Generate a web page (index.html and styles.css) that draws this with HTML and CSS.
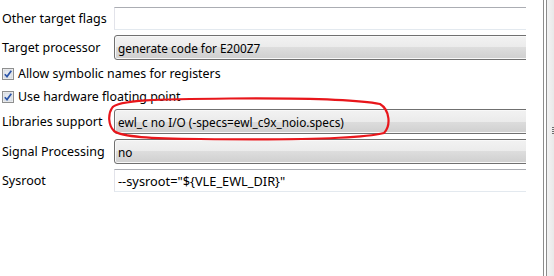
FILE: index.html
```html
<!DOCTYPE html>
<html lang="en">
<head>
<meta charset="UTF-8" />
<title>Compiler options</title>
<link rel="stylesheet" href="styles.css">
</head>
<body>

<div class="page">
  <div class="form">
    <div class="row text-row">
      <span class="label">Other target flags</span>
      <div class="textbox"></div>
    </div>

    <div class="row combo-row">
      <span class="label">Target processor</span>
      <div class="combo">generate code for E200Z7</div>
    </div>

    <div class="checks">
      <div class="check-row">
        <svg class="checkbox" width="12" height="12" viewBox="0 0 12 12">
          <rect x="0.5" y="0.5" width="11" height="11" fill="#f4f4f4" stroke="#8e8f8f"/>
          <rect x="2" y="2" width="8" height="8" fill="#e4e8ee" stroke="#c5cbd4" stroke-width="0.6"/>
          <path d="M2.8 6.2 L5 8.6 L9.3 2.8" fill="none" stroke="#2c55a8" stroke-width="1.7"/>
        </svg>
        <span>Allow symbolic names for registers</span>
      </div>
      <div class="check-row">
        <svg class="checkbox" width="12" height="12" viewBox="0 0 12 12">
          <rect x="0.5" y="0.5" width="11" height="11" fill="#f4f4f4" stroke="#8e8f8f"/>
          <rect x="2" y="2" width="8" height="8" fill="#e4e8ee" stroke="#c5cbd4" stroke-width="0.6"/>
          <path d="M2.8 6.2 L5 8.6 L9.3 2.8" fill="none" stroke="#2c55a8" stroke-width="1.7"/>
        </svg>
        <span>Use hardware floating point</span>
      </div>
    </div>

    <div class="row combo-row">
      <span class="label">Libraries support</span>
      <div class="combo">ewl_c no I/O (-specs=ewl_c9x_noio.specs)</div>
    </div>

    <div class="row combo-row">
      <span class="label">Signal Processing</span>
      <div class="combo">no</div>
    </div>

    <div class="row text-row">
      <span class="label">Sysroot</span>
      <div class="textbox">--sysroot="${VLE_EWL_DIR}"</div>
    </div>
  </div>

  <div class="gutter"></div>
  <div class="sash"><span class="grip"></span></div>
</div>

<!-- hand drawn marker round the libraries combo -->
<svg class="marker" width="554" height="276" viewBox="0 0 554 276">
  <path d="M112 108 C 116 100, 160 99, 230 98.5 C 300 98, 360 100, 380 104 C 390 110, 391 126, 384 133 C 360 139, 280 140, 200 139 C 150 138.5, 122 137, 114 131 C 108 125, 108 114, 112 108 Z"
        fill="none" stroke="#e8161b" stroke-width="2.2"/>
</svg>

</body>
</html>
```

FILE: styles.css
```css
body {
  margin: 0;
  background: #fff;
  font-family: "Noto Sans", "Open Sans", sans-serif;
  font-size: 12.4px;
  color: #000;
}
.page {
  display: flex;
  height: 276px;
}
.form {
  width: 526px;
  overflow: hidden;
  padding-top: 7px;
  display: flex;
  flex-direction: column;
  gap: 5px;
}
.row {
  display: flex;
  align-items: stretch;
}
.text-row {
  height: 23px;
}
.combo-row {
  height: 25px;
}
.label {
  width: 112px;
  padding-left: 2px;
  flex: none;
  display: flex;
  align-items: center;
  font-size: 12.5px;
}
.textbox {
  flex: none;
  width: 440px;
  box-sizing: border-box;
  border: 1px solid #e2e3ea;
  border-top-color: #abadb3;
  border-bottom-color: #e3e9ef;
  padding-left: 3px;
  display: flex;
  align-items: center;
  font-size: 12.8px;
}
.combo {
  flex: none;
  width: 440px;
  box-sizing: border-box;
  border: 1px solid #707070;
  border-radius: 3px;
  box-shadow: inset 0 0 0 1px #f8f8f8;
  background: linear-gradient(#f2f2f2 0%, #ebebeb 50%, #dddddd 50%, #cfcfcf 100%);
  padding-left: 3px;
  display: flex;
  align-items: center;
  font-size: 11.8px;
}
.checks {
  margin: -3px 0 -4px;
}
.check-row {
  height: 23px;
  display: flex;
  align-items: center;
  padding-left: 2px;
}
.checkbox {
  flex: none;
  margin-right: 4px;
}
.gutter {
  width: 17px;
}
.sash {
  width: 11px;
  box-sizing: border-box;
  border-left: 1px solid #8c8c8c;
  position: relative;
  background: linear-gradient(90deg, #fff 0, #fff 2px, #8c8c8c 2px, #8c8c8c 3px, #f4f4f4 3px, #e9e9e9 100%);
}
.grip {
  position: absolute;
  left: 8px;
  top: 127px;
  width: 3px;
  height: 8px;
  background: repeating-linear-gradient(#6d6d6d 0, #6d6d6d 1px, transparent 1px, transparent 2px);
}
.marker {
  position: absolute;
  left: 0;
  top: 0;
  pointer-events: none;
}
```
